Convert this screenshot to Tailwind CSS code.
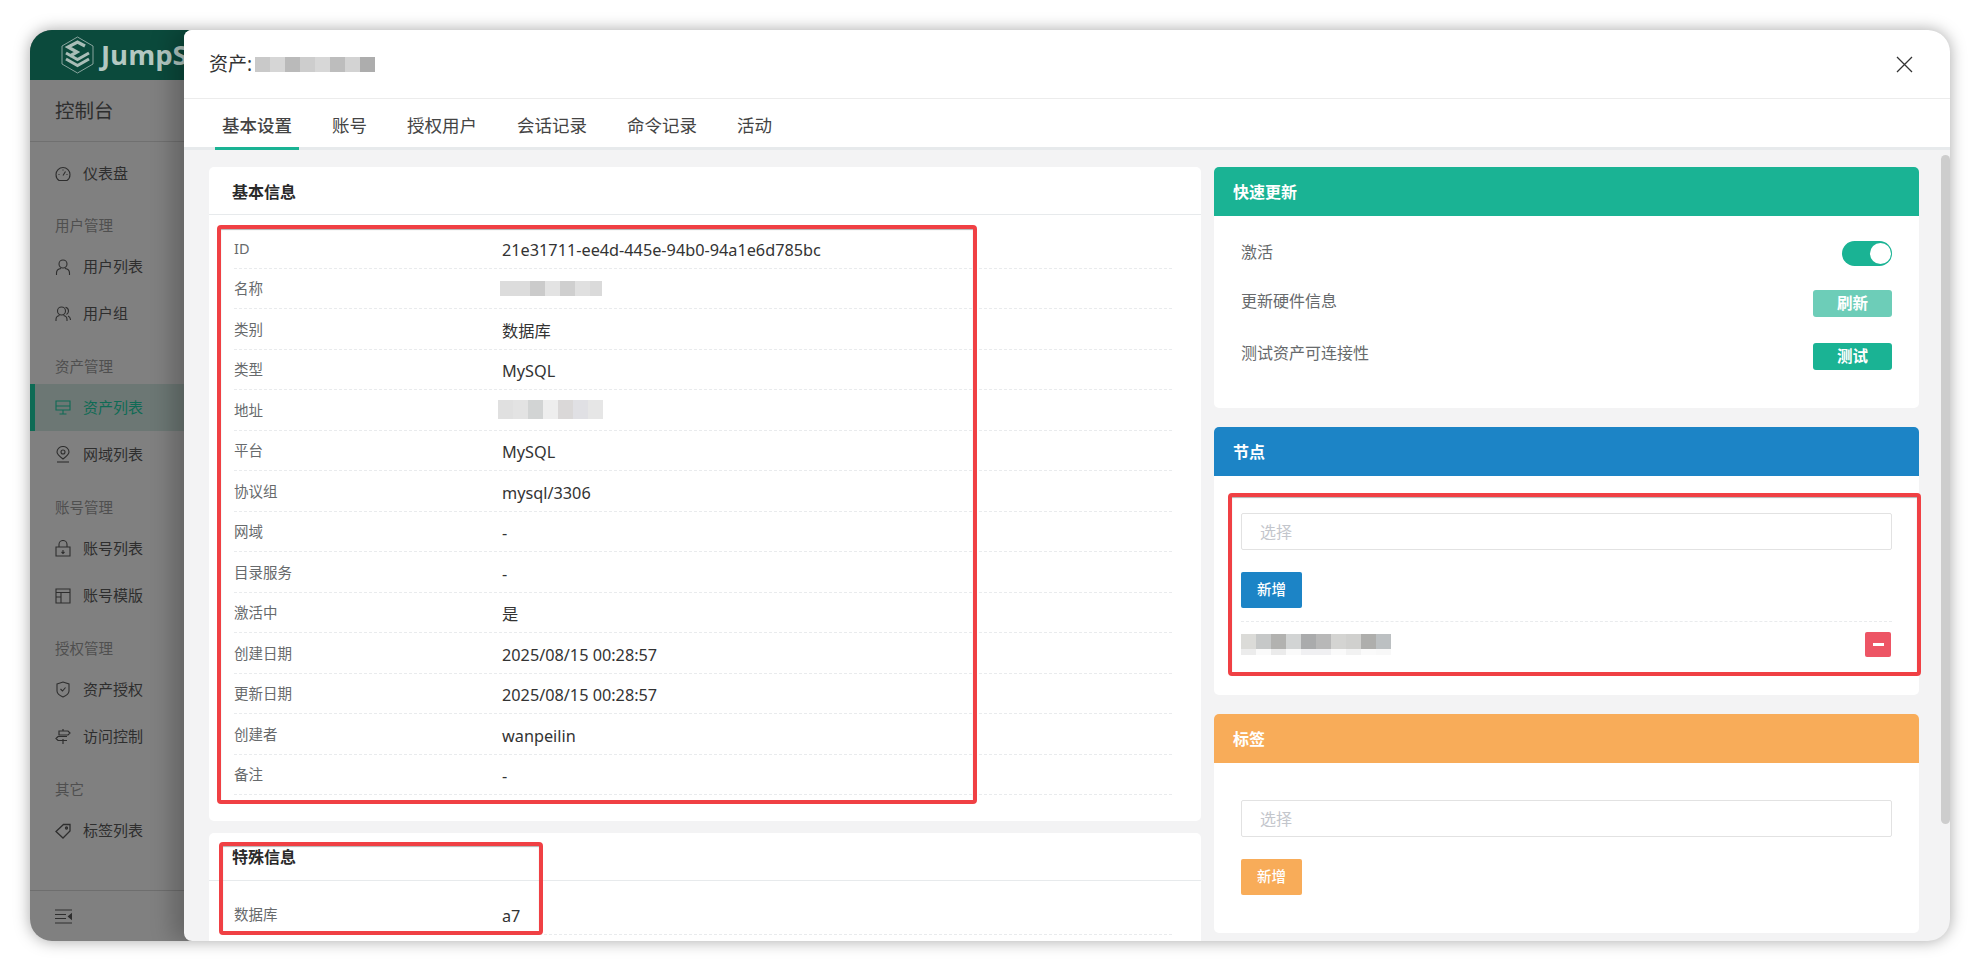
<!DOCTYPE html>
<html lang="zh">
<head>
  <meta charset="UTF-8">
  <title>资产详情</title>
  <script src="https://cdn.jsdelivr.net/npm/@tailwindcss/browser@4"></script>
</head>
<body class="bg-white h-[961px] overflow-hidden pt-[30px] pl-[30px] font-['Noto_Sans','Noto_Sans_CJK_SC',sans-serif]">

  <div class="relative flex w-[1920px] h-[911px] rounded-[22px] overflow-hidden">
    <!-- sidebar (dimmed) -->
    <aside class="w-[164px] shrink-0 -mr-[10px] flex flex-col bg-[#808080] text-[#2e2e2e]">
      <div class="h-[50px] shrink-0 bg-[#0b4a3c] flex items-center pl-[31px] overflow-hidden">
        <svg class="w-[33px] h-[38px] shrink-0" viewBox="0 0 33 38" fill="none" stroke="#a9bdb7">
          <path d="M16.5 1 L32 10 V28 L16.5 37 L1 28 V10 Z" stroke-width="0.8"/>
          <path d="M24 10 L16.5 6 L7 11 L16 16 L9 20" stroke-width="3.2"/>
          <path d="M5 17 L16.5 23.5 L28 17" stroke-width="3"/>
          <path d="M5 23 L16.5 29.5 L28 23" stroke-width="3"/>
        </svg>
        <span class="ml-[7px] text-[27.500px] leading-none font-bold text-[#b4c8c2] font-['Open_Sans',sans-serif] whitespace-nowrap">JumpS</span>
      </div>
      <div class="h-[62px] shrink-0 flex items-center pl-[25px] text-[19.5px] border-b border-[#707070]">控制台</div>
      <nav class="flex-1 pt-[8px] text-[15px]">
        <a class="h-[47px] flex items-center pl-[25px] gap-[9px]">
          <svg class="w-[16px] h-[16px]" viewBox="0 0 16 16" fill="none" stroke="currentColor" stroke-width="1.1"><path d="M4 14.5 H12 Q15 12.5 15 8.500 A7 7 0 0 0 1 8.500 Q1 12.500 4 14.500 Z"/><path d="M8 9.500 L10.500 5.500 M3.500 8.500 H4.500 M11.500 8.500 H12.500 M8 3.500 V4.500"/></svg>
          <span class="ml-[3px]">仪表盘</span>
        </a>
        <div class="h-[46px] flex items-end pb-[6px] pl-[25px] text-[14.5px] text-[#4f4f4f]">用户管理</div>
        <a class="h-[47px] flex items-center pl-[25px] gap-[12px]">
          <svg class="w-[16px] h-[16px]" viewBox="0 0 16 16" fill="none" stroke="currentColor" stroke-width="1.1"><circle cx="8" cy="5" r="4"/><path d="M1.500 16 V14 Q1.500 10 6 9.500 M14.500 16 V14 Q14.500 10 10 9.500"/></svg>
          <span>用户列表</span>
        </a>
        <a class="h-[47px] flex items-center pl-[25px] gap-[12px]">
          <svg class="w-[16px] h-[16px]" viewBox="0 0 16 16" fill="none" stroke="currentColor" stroke-width="1.1"><circle cx="6.500" cy="5" r="4"/><path d="M1 15 V13.500 Q1 10 4.500 9.500 M12 15 V13.500 Q12 10 8.500 9.500 M10.500 1.200 Q13.500 2 13.500 5 Q13.500 7.500 11.500 8.500 M13 10 Q15.500 11 15.500 14"/></svg>
          <span>用户组</span>
        </a>
        <div class="h-[47px] flex items-end pb-[6px] pl-[25px] text-[14.5px] text-[#4f4f4f]">资产管理</div>
        <a class="h-[47px] flex items-center pl-[20px] gap-[12px] border-l-[5px] border-[#0e6b55] bg-[#6c7774] text-[#0f6b55]">
          <svg class="w-[16px] h-[15px]" viewBox="0 0 16 15" fill="none" stroke="currentColor" stroke-width="1.1"><path d="M1 1 H15 V10 H1 Z M1 6 H15 M8 10 V14 M4.500 14 H11.500"/></svg>
          <span>资产列表</span>
        </a>
        <a class="h-[47px] flex items-center pl-[25px] gap-[12px]">
          <svg class="w-[16px] h-[17px]" viewBox="0 0 16 17" fill="none" stroke="currentColor" stroke-width="1.1"><path d="M8 13 Q2 8.500 2 6 A6 5.500 0 0 1 14 6 Q14 8.500 8 13 Z"/><circle cx="8" cy="6" r="2"/><path d="M2 16 H14"/></svg>
          <span>网域列表</span>
        </a>
        <div class="h-[47px] flex items-end pb-[6px] pl-[25px] text-[14.5px] text-[#4f4f4f]">账号管理</div>
        <a class="h-[47px] flex items-center pl-[25px] gap-[12px]">
          <svg class="w-[16px] h-[17px]" viewBox="0 0 16 17" fill="none" stroke="currentColor" stroke-width="1.1"><path d="M1 7 H15 V16 H1 Z M4 7 V4.500 A4 4 0 0 1 12 4.500 V7 M8 10 V13 M6.500 12 L8 13.500 L9.500 12"/></svg>
          <span>账号列表</span>
        </a>
        <a class="h-[47px] flex items-center pl-[25px] gap-[12px]">
          <svg class="w-[16px] h-[16px]" viewBox="0 0 16 16" fill="none" stroke="currentColor" stroke-width="1.1"><path d="M1 1 H15 V15 H1 Z M1 4.500 H15 M6 4.500 V15 M1 9 H6"/></svg>
          <span>账号模版</span>
        </a>
        <div class="h-[47px] flex items-end pb-[6px] pl-[25px] text-[14.5px] text-[#4f4f4f]">授权管理</div>
        <a class="h-[47px] flex items-center pl-[25px] gap-[12px]">
          <svg class="w-[16px] h-[17px]" viewBox="0 0 16 17" fill="none" stroke="currentColor" stroke-width="1.1"><path d="M2 3 L8 1 L14 3 V10 Q14 13.500 8 16 Q2 13.500 2 10 Z M5.500 8 L7.500 10 L10.500 6.500"/></svg>
          <span>资产授权</span>
        </a>
        <a class="h-[47px] flex items-center pl-[25px] gap-[12px]">
          <svg class="w-[16px] h-[17px]" viewBox="0 0 16 17" fill="none" stroke="currentColor" stroke-width="1.2"><path d="M8 1 V3 M8 11 V16 M4 3 H13 L15 5 L13 7 H4 Z M12 8.500 H3 L1 10.500 L3 12.500 H12"/></svg>
          <span>访问控制</span>
        </a>
        <div class="h-[47px] flex items-end pb-[6px] pl-[25px] text-[14.5px] text-[#4f4f4f]">其它</div>
        <a class="h-[47px] flex items-center pl-[25px] gap-[12px]">
          <svg class="w-[16px] h-[16px]" viewBox="0 0 16 16" fill="none" stroke="currentColor" stroke-width="1.3"><path d="M1 8.500 L8.500 1.500 H15 V8 L8 15 Z"/><circle cx="11.500" cy="5" r="1"/></svg>
          <span>标签列表</span>
        </a>
      </nav>
      <div class="h-[51px] shrink-0 border-t border-[#6e6e6e] flex items-center pl-[25px]">
        <svg class="w-[17px] h-[15px]" viewBox="0 0 17 15" fill="none" stroke="currentColor" stroke-width="1.2"><path d="M0 1 H17 M0 5.500 H11 M0 9.500 H11 M0 14 H17"/><path d="M16.500 5 L13.500 7.500 L16.500 10 Z" fill="currentColor"/></svg>
      </div>
    </aside>

    <!-- drawer -->
    <main class="relative flex-1 min-w-0 flex flex-col bg-[#f3f3f4] rounded-l-[8px] shadow-[-12px_0_22px_rgba(0,0,0,0.22)]">
      <header class="h-[69px] shrink-0 bg-white rounded-tl-[8px] border-b border-[#ececec] flex items-center justify-between pl-[25px] pr-[37px]">
        <div class="flex items-center text-[19px] text-[#333]">
          <span>资产:</span>
          <div class="flex ml-[3px] h-[15px]">
            <i class="w-[15px] bg-[#c9c9c9]"></i><i class="w-[15px] bg-[#d6d6d6]"></i><i class="w-[15px] bg-[#bababa]"></i><i class="w-[15px] bg-[#cdcdcd]"></i><i class="w-[15px] bg-[#d7d7d7]"></i><i class="w-[15px] bg-[#bdbdbd]"></i><i class="w-[15px] bg-[#d3d3d3]"></i><i class="w-[15px] bg-[#adadad]"></i>
          </div>
        </div>
        <svg class="w-[17px] h-[17px]" viewBox="0 0 17 17" fill="none" stroke="#333" stroke-width="1.300"><path d="M1 1 L16 16 M16 1 L1 16"/></svg>
      </header>

      <nav class="h-[51px] shrink-0 bg-white border-b-[3px] border-[#e7eaec] flex pl-[18px] pt-[4px] text-[17.500px] text-[#444]">
        <a class="relative px-[20px] flex items-center font-medium text-[#444]">基本设置<span class="absolute left-[13px] right-[13px] -bottom-[3px] h-[3px] bg-[#1ab394]"></span></a>
        <a class="px-[20px] flex items-center">账号</a>
        <a class="px-[20px] flex items-center">授权用户</a>
        <a class="px-[20px] flex items-center">会话记录</a>
        <a class="px-[20px] flex items-center">命令记录</a>
        <a class="px-[20px] flex items-center">活动</a>
      </nav>

      <div class="flex-1 min-h-0 overflow-hidden flex items-start gap-[13px] pl-[25px] pt-[17px]">
        <!-- left column -->
        <div class="w-[992px] shrink-0 flex flex-col gap-[12px]">
          <section class="h-[654px] bg-white rounded-[5px]">
            <h3 class="h-[48px] border-b border-[#e7eaec] flex items-center pl-[23px] pt-[2px] text-[16px] font-semibold text-[#2a2a2a]">基本信息</h3>
            <div class="ml-[25px] w-[938px] mt-[13px] text-[16.250px] text-[#333]">
              <div class="h-[40.500px] pt-[2px] border-b border-dashed border-[#e9ebed] flex items-center"><span class="w-[268px] text-[14.500px] text-[#676a6c]">ID</span><span class="pt-[2px]">21e31711-ee4d-445e-94b0-94a1e6d785bc</span></div>
              <div class="h-[40.500px] pt-[2px] border-b border-dashed border-[#e9ebed] flex items-center"><span class="w-[266px] text-[14.500px] text-[#676a6c]">名称</span><div class="flex h-[15px] -mt-[2px]"><i class="w-[15px] bg-[#dcdcdc]"></i><i class="w-[15px] bg-[#dcdcdc]"></i><i class="w-[15px] bg-[#cbcbcb]"></i><i class="w-[15px] bg-[#e3e3e3]"></i><i class="w-[15px] bg-[#cfcfcf]"></i><i class="w-[15px] bg-[#e0e0e0]"></i><i class="w-[12px] bg-[#dadada]"></i></div></div>
              <div class="h-[40.500px] pt-[2px] border-b border-dashed border-[#e9ebed] flex items-center"><span class="w-[268px] text-[14.500px] text-[#676a6c]">类别</span><span class="pt-[2px]">数据库</span></div>
              <div class="h-[40.500px] pt-[2px] border-b border-dashed border-[#e9ebed] flex items-center"><span class="w-[268px] text-[14.500px] text-[#676a6c]">类型</span><span class="pt-[2px]">MySQL</span></div>
              <div class="h-[40.500px] pt-[2px] border-b border-dashed border-[#e9ebed] flex items-center"><span class="w-[264px] text-[14.500px] text-[#676a6c]">地址</span><div class="flex h-[19px] -mt-[2px]"><i class="w-[15px] bg-[#e0e0e0]"></i><i class="w-[15px] bg-[#e3e3e3]"></i><i class="w-[15px] bg-[#d2d4d4]"></i><i class="w-[15px] bg-[#eeeeee]"></i><i class="w-[15px] bg-[#dad8d8]"></i><i class="w-[15px] bg-[#e0e0e4]"></i><i class="w-[15px] bg-[#e6e6e6]"></i></div></div>
              <div class="h-[40.500px] pt-[2px] border-b border-dashed border-[#e9ebed] flex items-center"><span class="w-[268px] text-[14.500px] text-[#676a6c]">平台</span><span class="pt-[2px]">MySQL</span></div>
              <div class="h-[40.500px] pt-[2px] border-b border-dashed border-[#e9ebed] flex items-center"><span class="w-[268px] text-[14.500px] text-[#676a6c]">协议组</span><span class="pt-[2px]">mysql/3306</span></div>
              <div class="h-[40.500px] pt-[2px] border-b border-dashed border-[#e9ebed] flex items-center"><span class="w-[268px] text-[14.500px] text-[#676a6c]">网域</span><span class="pt-[2px]">-</span></div>
              <div class="h-[40.500px] pt-[2px] border-b border-dashed border-[#e9ebed] flex items-center"><span class="w-[268px] text-[14.500px] text-[#676a6c]">目录服务</span><span class="pt-[2px]">-</span></div>
              <div class="h-[40.500px] pt-[2px] border-b border-dashed border-[#e9ebed] flex items-center"><span class="w-[268px] text-[14.500px] text-[#676a6c]">激活中</span><span class="pt-[2px]">是</span></div>
              <div class="h-[40.500px] pt-[2px] border-b border-dashed border-[#e9ebed] flex items-center"><span class="w-[268px] text-[14.500px] text-[#676a6c]">创建日期</span><span class="pt-[2px]">2025/08/15 00:28:57</span></div>
              <div class="h-[40.500px] pt-[2px] border-b border-dashed border-[#e9ebed] flex items-center"><span class="w-[268px] text-[14.500px] text-[#676a6c]">更新日期</span><span class="pt-[2px]">2025/08/15 00:28:57</span></div>
              <div class="h-[40.500px] pt-[2px] border-b border-dashed border-[#e9ebed] flex items-center"><span class="w-[268px] text-[14.500px] text-[#676a6c]">创建者</span><span class="pt-[2px]">wanpeilin</span></div>
              <div class="h-[40.500px] pt-[2px] border-b border-dashed border-[#e9ebed] flex items-center"><span class="w-[268px] text-[14.500px] text-[#676a6c]">备注</span><span class="pt-[2px]">-</span></div>
            </div>
          </section>
          <section class="h-[120px] bg-white rounded-[5px]">
            <h3 class="h-[48px] border-b border-[#e7eaec] flex items-center pl-[23px] text-[16px] font-semibold text-[#2a2a2a]">特殊信息</h3>
            <div class="ml-[25px] w-[938px] mt-[13px] text-[16.250px] text-[#333]">
              <div class="h-[40.500px] pt-[2px] border-b border-dashed border-[#e9ebed] flex items-center"><span class="w-[268px] text-[14.500px] text-[#676a6c]">数据库</span><span class="pt-[2px]">a7</span></div>
            </div>
          </section>
        </div>

        <!-- right column -->
        <div class="w-[705px] shrink-0 flex flex-col gap-[19px]">
          <section class="h-[241px] bg-white rounded-[5px] overflow-hidden">
            <h3 class="h-[49px] bg-[#1ab394] flex items-center pl-[19px] text-[16px] font-semibold text-white">快速更新</h3>
            <div class="pl-[27px] pr-[27px] text-[16px] text-[#676a6c]">
              <div class="h-[25px] mt-[25px] flex items-center justify-between">
                <span class="-mt-[4px]">激活</span>
                <div class="w-[50px] h-[25px] rounded-full bg-[#1ab394] flex items-center justify-end pr-[1px]"><i class="w-[21px] h-[21px] rounded-full bg-white"></i></div>
              </div>
              <div class="h-[27px] mt-[24px] flex items-center justify-between">
                <span class="-mt-[5px]">更新硬件信息</span>
                <button class="w-[79px] h-[27px] rounded-[3px] bg-[#6dcdb8] text-white text-[15.500px] font-semibold">刷新</button>
              </div>
              <div class="h-[27px] mt-[26px] flex items-center justify-between">
                <span class="-mt-[7px]">测试资产可连接性</span>
                <button class="w-[79px] h-[27px] rounded-[3px] bg-[#1ab394] text-white text-[15.500px] font-semibold">测试</button>
              </div>
            </div>
          </section>

          <section class="h-[268px] bg-white rounded-[5px] overflow-hidden">
            <h3 class="h-[49px] bg-[#1c84c6] flex items-center pl-[19px] text-[16px] font-semibold text-white">节点</h3>
            <div class="pl-[27px] pr-[27px] pt-[37px]">
              <div class="h-[37px] border border-[#e2e2e2] rounded-[2px] flex items-center pl-[18px] text-[16px] text-[#c3c6cc]">选择</div>
              <button class="mt-[22px] w-[61px] h-[36px] rounded-[2px] bg-[#1c84c6] text-white text-[14.500px] font-medium block">新增</button>
              <div class="mt-[13px] border-t border-dashed border-[#e9ebed] h-[36px] pt-[10px] flex justify-between pr-[1px]">
                <div class="flex flex-col">
                  <div class="flex h-[15px] mt-[2px]"><i class="w-[15px] bg-[#dbdbd8]"></i><i class="w-[15px] bg-[#c6c8c8]"></i><i class="w-[15px] bg-[#b2b2b0]"></i><i class="w-[15px] bg-[#d2d4d4]"></i><i class="w-[15px] bg-[#aaabac]"></i><i class="w-[15px] bg-[#b8b8b8]"></i><i class="w-[15px] bg-[#d4d4d2]"></i><i class="w-[15px] bg-[#d0d0ce]"></i><i class="w-[15px] bg-[#aeaeac]"></i><i class="w-[15px] bg-[#bcc0c2]"></i></div>
                  <div class="flex h-[6px]"><i class="w-[15px] bg-[#ececec]"></i><i class="w-[15px] bg-[#fafafa]"></i><i class="w-[15px] bg-[#ebebeb]"></i><i class="w-[15px] bg-[#fafafa]"></i><i class="w-[15px] bg-[#f0f0f2]"></i><i class="w-[15px] bg-[#f0f0f2]"></i><i class="w-[15px] bg-[#fafafa]"></i><i class="w-[15px] bg-[#f2f2f2]"></i><i class="w-[15px] bg-[#fafafa]"></i><i class="w-[15px] bg-[#f8f8f8]"></i></div>
                </div>
                <button class="w-[26px] h-[25px] rounded-[2px] bg-[#ed5565] flex items-center justify-center"><i class="w-[11px] h-[3px] bg-white"></i></button>
              </div>
            </div>
          </section>

          <section class="h-[219px] bg-white rounded-[5px] overflow-hidden">
            <h3 class="h-[49px] bg-[#f8ac59] flex items-center pl-[19px] text-[16px] font-semibold text-white">标签</h3>
            <div class="pl-[27px] pr-[27px] pt-[37px]">
              <div class="h-[37px] border border-[#e2e2e2] rounded-[2px] flex items-center pl-[18px] text-[16px] text-[#c3c6cc]">选择</div>
              <button class="mt-[22px] w-[61px] h-[36px] rounded-[2px] bg-[#f8ac59] text-white text-[14.500px] font-medium block">新增</button>
            </div>
          </section>
        </div>
      </div>

      <!-- scrollbar -->
      <div class="absolute right-0 top-[125px] w-[9px] h-[669px] rounded-full bg-[#cdcdcd]"></div>
    </main>
  </div>

  <!-- annotation boxes drawn over the screenshot, plus window shadow -->
  <div class="absolute left-[30px] top-[30px] w-[1920px] h-[911px] rounded-[22px] shadow-[0_0_16px_rgba(0,0,0,0.35)] pointer-events-none"></div>
  <div class="absolute left-[217px] top-[225px] w-[760px] h-[579px] rounded-[4px] border-[4px] border-[#f04044] shadow-[inset_0_1px_1px_rgba(0,0,0,0.3)] pointer-events-none"></div>
  <div class="absolute left-[219px] top-[842px] w-[324px] h-[93px] rounded-[4px] border-[4px] border-[#f04044] shadow-[inset_0_1px_1px_rgba(0,0,0,0.3)] pointer-events-none"></div>
  <div class="absolute left-[1228px] top-[493px] w-[693px] h-[183px] rounded-[4px] border-[4px] border-[#f04044] shadow-[inset_0_1px_1px_rgba(0,0,0,0.3)] pointer-events-none"></div>
</body>
</html>
